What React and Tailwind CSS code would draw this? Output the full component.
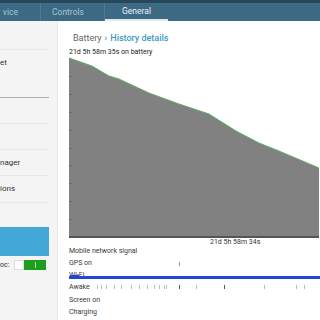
import React from 'react'

const awakeTicks = [98, 102, 107, 115, 122, 132, 140, 148, 155, 160, 165, 167, 180, 197, 225, 265, 297, 305]
const events = ['Mobile network signal', 'GPS on', 'Wi-Fi', 'Awake', 'Screen on', 'Charging']

function Chart() {
  // curve from the screenshot, x relative to chart left (70), y relative to chart top (56)
  const pts = [[0, 1], [23, 9], [40, 19], [50, 22], [80, 36], [110, 47], [140, 57], [167, 74], [190, 86], [210, 94], [250, 111]]
  const line = pts.map(p => p.join(',')).join(' ')
  const area = `0,179 ${line} 250,179`
  return (
    <svg width="250" height="182" className="block">
      <polygon points={area} fill="#818181" />
      <polyline points={line} fill="none" stroke="#5fae5f" strokeWidth="1" />
      {[19, 37, 55, 73, 91, 108, 126, 144, 162].map(y => (
        <rect key={y} x="1" y={y} width="1" height="1" fill="#444" />
      ))}
      <rect x="0" y="179" width="250" height="2" fill="#555" />
    </svg>
  )
}

export default function App() {
  return (
    <div className="w-[320px] h-[320px] overflow-hidden bg-white relative" style={{ fontFamily: 'Roboto, "Liberation Sans", sans-serif' }}>
      <div className="h-[21px] bg-[#3c6a84] border-t-[3px] border-[#27485a] flex text-[8.5px] text-[#a9c3d0]">
        <div className="w-[41px] flex items-center justify-end pr-[22px] border-r border-[#4e7a92]">vice</div>
        <div className="w-[64px] flex items-center pl-[11px] border-r border-[#4e7a92]">Controls</div>
        <div className="w-[63px] flex items-center justify-center text-[#e8f0f4] border-b-[2px] border-[#dfe9ee]">General</div>
      </div>
      <div className="flex h-[299px]">
        <div className="w-[58px] bg-[#f4f4f4] border-r border-[#e6e6e6] pr-[8px] text-[8px] text-[#333]">
          <div className="h-[29px] border-b border-[#e8e8e8]" />
          <div className="h-[48px] border-b border-[#a8b4b8] pt-[8px] leading-[10px]">et</div>
          <div className="h-[26px] border-b border-[#e8e8e8]" />
          <div className="h-[26px] border-b border-[#e8e8e8]" />
          <div className="h-[26px] border-b border-[#e8e8e8] flex items-center">nager</div>
          <div className="h-[27px] border-b border-[#e8e8e8] flex items-center">ions</div>
          <div className="h-[24px]" />
          <div className="h-[29px] bg-[#44a8d6]" />
          <div className="flex items-center mt-[4px] h-[10px] text-[7px]">
            <span className="w-[14px]">oc:</span>
            <div className="w-[10px] h-[10px] bg-white border border-[#ddd]" />
            <div className="w-[22px] h-[10px] bg-[#1e9e1e] flex justify-center items-center">
              <div className="w-px h-[6px] bg-[#9ee59e]" />
            </div>
          </div>
        </div>
        <div className="flex-1 pl-[11px] relative">
          <div className="h-[26px] flex items-end text-[9px] text-[#666] pl-[4px] pb-[2px]">
            Battery <span className="mx-[3px]">›</span><span className="text-[#3c9bc4] font-medium">History details</span>
          </div>
          <div className="text-[7px] text-[#222] leading-[9px] mt-[1px]">21d 5h 58m 35s on battery</div>
          <Chart />
          <div className="text-[7px] text-[#333] leading-[9px] ml-[141px] -mt-[1px]">21d 5h 58m 34s</div>
          <div className="text-[7px] text-[#3a3a3a] relative -mt-[2px]">
            {events.map(e => (
              <div key={e} className="h-[12.2px] flex items-center">{e}</div>
            ))}
            <div className="absolute left-0 right-0 top-[31px] h-[3px] bg-[#2346d6]" />
            <div className="absolute left-[1px] w-[9px] top-[30px] h-[4px] bg-[#2346d6]" />
            <div className="absolute left-[110px] top-[17px] w-px h-[4px] bg-[#999]" />
            {awakeTicks.map((x, i) => (
              <div key={i} className="absolute top-[40px] w-px h-[4px]" style={{ left: x - 70, background: x === 180 || x === 225 ? '#555' : '#bbb' }} />
            ))}
          </div>
        </div>
      </div>
    </div>
  )
}
